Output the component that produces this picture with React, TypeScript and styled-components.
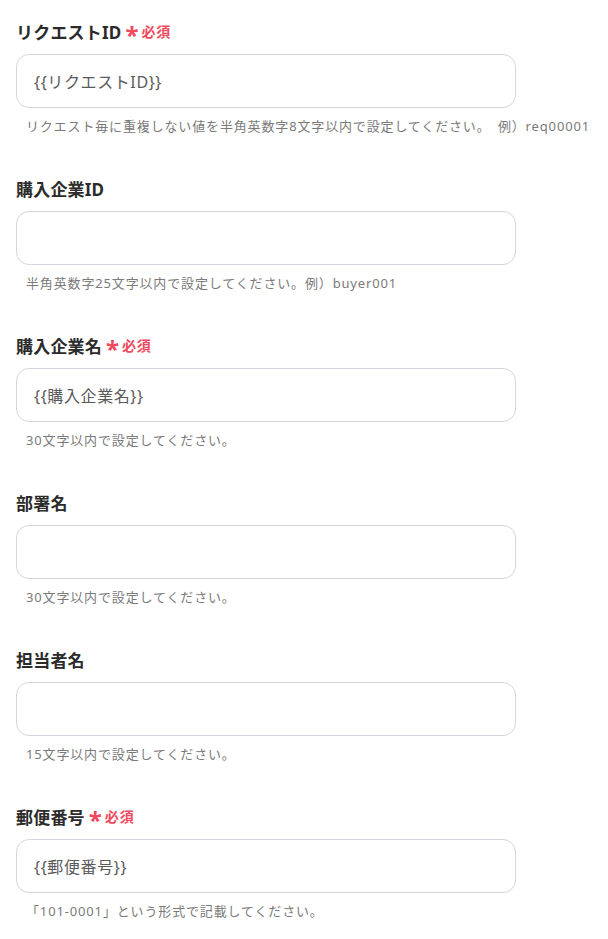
import styled, { createGlobalStyle } from "styled-components";

interface Field {
    label: string;
    required?: boolean;
    value?: string;
    hint: string;
}

const FIELDS: Field[] = [
    { label: "リクエストID", required: true, value: "{{リクエストID}}", hint: "リクエスト毎に重複しない値を半角英数字8文字以内で設定してください。　例）req00001" },
    { label: "購入企業ID", hint: "半角英数字25文字以内で設定してください。例）buyer001" },
    { label: "購入企業名", required: true, value: "{{購入企業名}}", hint: "30文字以内で設定してください。" },
    { label: "部署名", hint: "30文字以内で設定してください。" },
    { label: "担当者名", hint: "15文字以内で設定してください。" },
    { label: "郵便番号", required: true, value: "{{郵便番号}}", hint: "「101-0001」という形式で記載してください。" },
];

const GlobalStyle = createGlobalStyle`
    body {
        margin: 0;
        background: #ffffff;
        font-family: "Noto Sans", "Noto Sans CJK JP", sans-serif;
        overflow: hidden;
    }
`;

const Form = styled.div`
    display: flex;
    flex-direction: column;
    gap: 40px;
    padding: 19px 0 0 16px;
    width: 592px;
`;

const FieldBlock = styled.div`
    display: flex;
    flex-direction: column;
`;

const LabelRow = styled.div`
    display: flex;
    align-items: center;
    height: 24px;
    margin-bottom: 11px;
`;

const Label = styled.span`
    font-size: 17px;
    font-weight: 700;
    color: #2b2b2b;
    letter-spacing: 0.2px;
`;

const Asterisk = styled.span`
    color: #ef4a5e;
    font-size: 24px;
    font-weight: 700;
    line-height: 1;
    margin: 8px 3px 0 4px;
`;

const Required = styled.span`
    color: #ef4a5e;
    font-size: 14px;
    font-weight: 700;
    letter-spacing: 0.8px;
`;

const InputBox = styled.div`
    box-sizing: border-box;
    width: 500px;
    height: 54px;
    border: 1px solid #d3d6dc;
    border-radius: 13px;
    display: flex;
    align-items: center;
    padding: 0 17px;
    font-size: 16px;
    letter-spacing: 0.6px;
    color: #5a5a5a;
`;

const Hint = styled.div`
    font-size: 13px;
    letter-spacing: 0.85px;
    line-height: 20px;
    color: #7a7a7a;
    padding-left: 10px;
    margin-top: 8px;
    white-space: nowrap;
`;

const App = (): JSX.Element => (
    <>
        <GlobalStyle />
        <Form>
            {FIELDS.map((f) => (
                <FieldBlock key={f.label}>
                    <LabelRow>
                        <Label>{f.label}</Label>
                        {f.required && <>
                            <Asterisk>*</Asterisk>
                            <Required>必須</Required>
                        </>}
                    </LabelRow>
                    <InputBox>{f.value}</InputBox>
                    <Hint>{f.hint}</Hint>
                </FieldBlock>
            ))}
        </Form>
    </>
);

export default App;
